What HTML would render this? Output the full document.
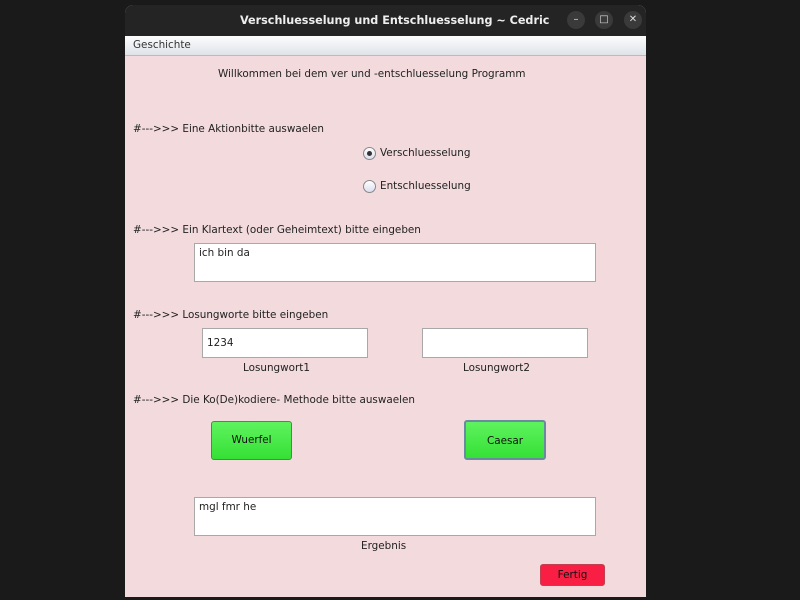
<!DOCTYPE html>
<html><head><meta charset="utf-8"><style>
body{margin:0;width:800px;height:600px;background:#1a1a1a;position:relative;overflow:hidden;font-family:"DejaVu Sans","Liberation Sans",sans-serif;font-size:10.4px;color:#222}
.a{position:absolute;white-space:nowrap}
.win{position:absolute;left:125px;top:5px;width:521px;height:592px;background:#f2dadd;border-radius:8px 8px 0 0;overflow:hidden}
.title{position:absolute;left:0;top:0;width:521px;height:31px;background:#242424;color:#eee;font-weight:bold;font-size:11.2px}
.menu{position:absolute;left:0;top:31px;width:521px;height:19px;background:linear-gradient(#fdfdfe,#dfe3e8);border-bottom:1px solid #b8bcc2}
.box{position:absolute;background:#fff;border:1px solid #a8a8a8;box-sizing:border-box;padding:3px 4px}
.btn{position:absolute;background:linear-gradient(#5ef35e,#35e035);border:1px solid #4a8a4a;border-radius:3px;box-sizing:border-box;text-align:center;color:#111}
.circ{position:absolute;width:18px;height:18px;border-radius:50%;background:#3a3a3a;color:#ddd;font-size:10px;text-align:center;line-height:18px;font-weight:normal}
.radio{position:absolute;width:11px;height:11px;border-radius:50%;border:1px solid #888;background:linear-gradient(#fff,#dde)}
</style></head><body>
<div class="win">
 <div class="title"><div class="a" style="left:115px;top:9px">Verschluesselung und Entschluesselung ~ Cedric</div>
 <div class="circ" style="left:442px;top:6px">–</div>
 <div class="circ" style="left:470px;top:6px">□</div>
 <div class="circ" style="left:499px;top:6px">✕</div></div>
 <div class="menu"><div class="a" style="left:8px;top:3px;color:#333">Geschichte</div></div>
</div>
<div class="a" style="left:218px;top:68px">Willkommen bei dem ver und -entschluesselung Programm</div>
<div class="a" style="left:133px;top:123px">#--->>> Eine Aktionbitte auswaelen</div>
<div class="radio" style="left:363px;top:147px"><div style="position:absolute;left:3px;top:3px;width:5px;height:5px;border-radius:50%;background:#333"></div></div>
<div class="a" style="left:380px;top:147px">Verschluesselung</div>
<div class="radio" style="left:363px;top:180px"></div>
<div class="a" style="left:380px;top:180px">Entschluesselung</div>
<div class="a" style="left:133px;top:224px">#--->>> Ein Klartext (oder Geheimtext) bitte eingeben</div>
<div class="box" style="left:194px;top:243px;width:402px;height:39px">ich bin da</div>
<div class="a" style="left:133px;top:309px">#--->>> Losungworte bitte eingeben</div>
<div class="box" style="left:202px;top:328px;width:166px;height:30px;padding-top:8px">1234</div>
<div class="box" style="left:422px;top:328px;width:166px;height:30px"></div>
<div class="a" style="left:243px;top:362px">Losungwort1</div>
<div class="a" style="left:463px;top:362px">Losungwort2</div>
<div class="a" style="left:133px;top:394px">#--->>> Die Ko(De)kodiere- Methode bitte auswaelen</div>
<div class="btn" style="left:211px;top:421px;width:81px;height:39px;line-height:37px">Wuerfel</div>
<div class="btn" style="left:464px;top:420px;width:82px;height:40px;line-height:38px;border:2px solid #6a8aa0">Caesar</div>
<div class="box" style="left:194px;top:497px;width:402px;height:39px">mgl fmr he</div>
<div class="a" style="left:361px;top:540px">Ergebnis</div>
<div class="btn" style="left:540px;top:564px;width:65px;height:22px;line-height:20px;background:#f81e44;border-color:#c04050">Fertig</div>
</body></html>
